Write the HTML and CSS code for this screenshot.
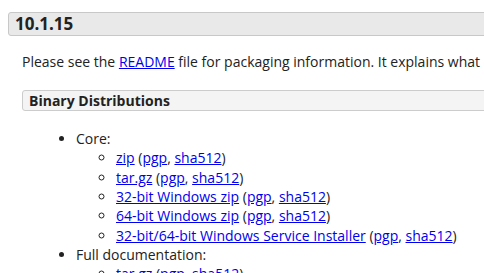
FILE: index.html
```html
<!DOCTYPE html>
<html lang="en">
<head>
    <meta charset="UTF-8">
    <meta name="viewport" content="width=device-width, initial-scale=1.0">
    <title>Apache Tomcat 10 - Downloads</title>
    <link rel="stylesheet" href="styles.css">
</head>
<body>
    <div class="page">
        <h3 class="release-title">10.1.15</h3>
        <div class="release-body">
            <p class="intro">Please see the <a href="#">README</a> file for packaging information. It explains what every distribution contains.</p>

            <h4 class="dist-title">Binary Distributions</h4>
            <ul class="dist-list">
                <li>Core:
                    <ul>
                        <li><a href="#">zip</a> (<a href="#">pgp</a>, <a href="#">sha512</a>)</li>
                        <li><a href="#">tar.gz</a> (<a href="#">pgp</a>, <a href="#">sha512</a>)</li>
                        <li><a href="#">32-bit Windows zip</a> (<a href="#">pgp</a>, <a href="#">sha512</a>)</li>
                        <li><a href="#">64-bit Windows zip</a> (<a href="#">pgp</a>, <a href="#">sha512</a>)</li>
                        <li><a href="#">32-bit/64-bit Windows Service Installer</a> (<a href="#">pgp</a>, <a href="#">sha512</a>)</li>
                    </ul>
                </li>
                <li>Full documentation:
                    <ul>
                        <li><a href="#">tar.gz</a> (<a href="#">pgp</a>, <a href="#">sha512</a>)</li>
                    </ul>
                </li>
                <li>Deployer:
                    <ul>
                        <li><a href="#">zip</a> (<a href="#">pgp</a>, <a href="#">sha512</a>)</li>
                        <li><a href="#">tar.gz</a> (<a href="#">pgp</a>, <a href="#">sha512</a>)</li>
                    </ul>
                </li>
            </ul>
        </div>
    </div>
</body>
</html>
```

FILE: styles.css
```css
* {
    margin: 0;
    padding: 0;
    box-sizing: border-box;
}

html, body {
    overflow: hidden;
}

body {
    background-color: #fff;
    font-family: 'Open Sans', sans-serif;
    font-size: 14px;
    line-height: 19px;
    color: #222;
}

.page {
    width: 780px;
    padding: 12px 0 0 8px;
}

a {
    color: #00e;
    text-decoration: underline;
}

.release-title {
    font-size: 17px;
    font-weight: bold;
    line-height: 22px;
    padding: 0 6px;
    background-color: #e9e9e9;
    border: 1px solid #c8c8c8;
    border-radius: 3px;
}

.release-body {
    padding-left: 14px;
}

.intro {
    margin-top: 16px;
}

.dist-title {
    margin-top: 19px;
    font-size: 14px;
    font-weight: bold;
    line-height: 19px;
    padding: 0 6px;
    background-color: #f4f4f4;
    border: 1px solid #ccc;
    border-radius: 3px;
}

.dist-list {
    margin: 18px 0 0 14px;
    padding-left: 40px;
    line-height: 19.33px;
    list-style: disc;
}

.dist-list ul {
    padding-left: 40px;
    list-style: circle;
}
```
